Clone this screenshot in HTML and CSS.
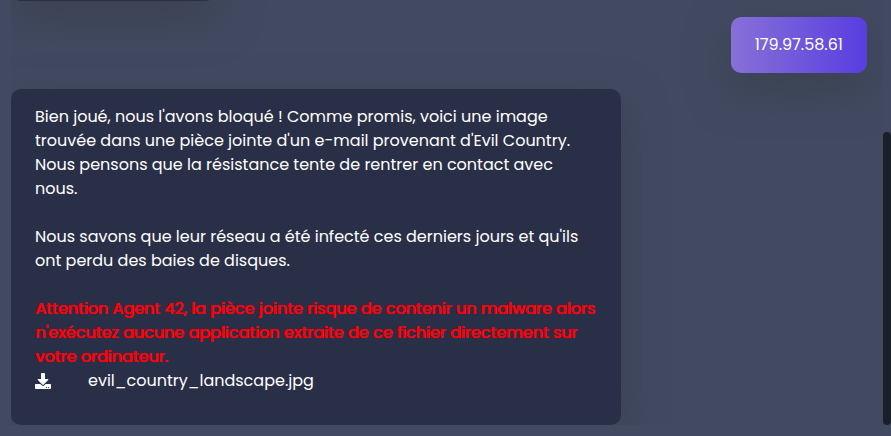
FILE: index.html
```html
<!DOCTYPE html>
<html lang="fr">
<head>
<meta charset="utf-8">
<meta name="viewport" content="width=device-width, initial-scale=1">
<title>Messages</title>
<link rel="stylesheet" href="styles.css">
</head>
<body>
<main class="chat">
  <div class="messages">
    <div class="message received previous"></div>
    <div class="message sent">179.97.58.61</div>
    <article class="message received">
      <p>Bien joué, nous l'avons bloqué ! Comme promis, voici une image trouvée dans une pièce jointe d'un e-mail provenant d'Evil Country. Nous pensons que la résistance tente de rentrer en contact avec nous.</p>
      <p>Nous savons que leur réseau a été infecté ces derniers jours et qu'ils ont perdu des baies de disques.</p>
      <p class="warning">Attention Agent 42, la pièce jointe risque de contenir un malware alors n'exécutez aucune application extraite de ce fichier directement sur votre ordinateur.</p>
      <a class="attachment" href="#">
        <svg class="icon" viewBox="0 0 512 512" aria-hidden="true"><path fill="currentColor" d="M216 0h80c13.300 0 24 10.700 24 24v168h87.700c17.800 0 26.700 21.500 14.100 34.100L269.700 378.300c-7.500 7.500-19.800 7.500-27.300 0L90.100 226.100c-12.600-12.600-3.700-34.100 14.100-34.100H192V24c0-13.300 10.700-24 24-24zm296 376v112c0 13.300-10.700 24-24 24H24c-13.300 0-24-10.700-24-24V376c0-13.300 10.700-24 24-24h146.700l49 49c20.100 20.100 52.500 20.100 72.600 0l49-49H488c13.300 0 24 10.700 24 24zm-124 88c0-11-9-20-20-20s-20 9-20 20 9 20 20 20 20-9 20-20zm64 0c0-11-9-20-20-20s-20 9-20 20 9 20 20 20 20-9 20-20z"/></svg>
        <span>evil_country_landscape.jpg</span>
      </a>
    </article>
  </div>
  <div class="scrollbar" aria-hidden="true"><div class="thumb"></div></div>
</main>
</body>
</html>
```
FILE: styles.css
```css
* { box-sizing: border-box; }

body {
  margin: 0;
  background: #424a61;
  color: #fff;
  font: 16px/24px Poppins, Inter, sans-serif;
}

.chat {
  display: flex;
  height: 100vh;
  padding: 0 0 11px 11px;
}

.messages {
  flex: 1;
  min-width: 0;
  display: flex;
  flex-direction: column;
  justify-content: flex-end;
  gap: 16px;
  overflow: hidden;
}

.message {
  flex: none;
  max-width: 70%;
  padding: 16px 24px;
  border-radius: 10px;
  box-shadow: 0 16px 44px rgba(56, 63, 75, 0.75);
}

.received {
  align-self: flex-start;
  padding-bottom: 32px;
  background: #2a2f48;
}

.previous {
  width: 204px;
  height: 56px;
}

.sent {
  align-self: flex-end;
  margin-right: 16px;
  background: linear-gradient(90deg, #8870d8, #583ee0);
}

p { margin: 0 0 24px; }

.warning {
  margin: 0;
  color: #ff0008;
  text-shadow: 1px 0 #ff0008;
}

.attachment {
  display: flex;
  align-items: center;
  gap: 37px;
  color: inherit;
  text-decoration: none;
}

.icon {
  width: 16px;
  height: 16px;
}

.scrollbar {
  display: flex;
  align-items: flex-end;
  width: 8px;
}

.thumb {
  width: 100%;
  height: 69%;
  border-radius: 5px;
  background: #1b1f2b;
}
```
